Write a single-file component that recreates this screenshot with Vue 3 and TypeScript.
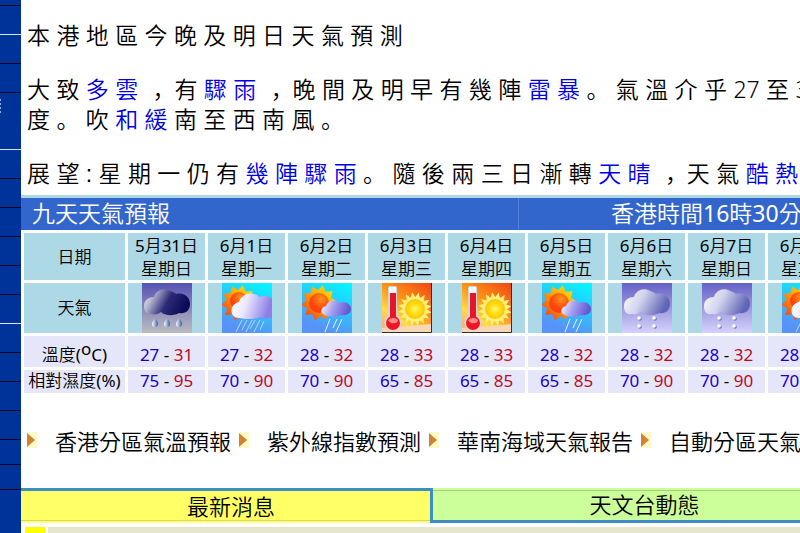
<script setup lang="ts">
type Kind = 'plain' | 'key' | 'num' | 'stop' | 'comma'
interface Part { kind: Kind; text: string }
type Icon = 'rain' | 'cloudy' | 'sunny' | 'hot' | 'showers'
interface Day { month: number; day: number; week: string; icon: Icon; temp: [number, number]; hum: [number, number] }

const p = (text: string): Part => ({ kind: 'plain', text })
const k = (text: string): Part => ({ kind: 'key', text })
const n = (text: string): Part => ({ kind: 'num', text })
const stop: Part = { kind: 'stop', text: '。' }
const comma: Part = { kind: 'comma', text: '，' }

const paragraphs: Part[][][] = [
  [[p('本 港 地 區 今 晚 及 明 日 天 氣 預 測')]],
  [
    [p('大 致 '), k('多 雲'), p(' '), comma, p(' 有 '), k('驟 雨'), p(' '), comma, p(' 晚 間 及 明 早 有 幾 陣 '), k('雷 暴'), p(' '), stop,
      p(' 氣 溫 介 乎 '), n('27'), p(' 至 '), n('31')],
    [p('度 '), stop, p(' 吹 '), k('和 緩'), p(' 南 至 西 南 風 '), stop],
  ],
  [
    [p('展 望 : 星 期 一 仍 有 '), k('幾 陣 驟 雨'), p(' '), stop, p(' 隨 後 兩 三 日 漸 轉 '), k('天 晴'),
      p(' '), comma, p(' 天 氣 '), k('酷 熱')],
  ],
]

const days: Day[] = [
  { month: 5, day: 31, week: '星期日', icon: 'rain', temp: [27, 31], hum: [75, 95] },
  { month: 6, day: 1, week: '星期一', icon: 'cloudy', temp: [27, 32], hum: [70, 90] },
  { month: 6, day: 2, week: '星期二', icon: 'sunny', temp: [28, 32], hum: [70, 90] },
  { month: 6, day: 3, week: '星期三', icon: 'hot', temp: [28, 33], hum: [65, 85] },
  { month: 6, day: 4, week: '星期四', icon: 'hot', temp: [28, 33], hum: [65, 85] },
  { month: 6, day: 5, week: '星期五', icon: 'sunny', temp: [28, 32], hum: [65, 85] },
  { month: 6, day: 6, week: '星期六', icon: 'showers', temp: [28, 32], hum: [70, 90] },
  { month: 6, day: 7, week: '星期日', icon: 'showers', temp: [28, 32], hum: [70, 90] },
  { month: 6, day: 8, week: '星期一', icon: 'cloudy', temp: [28, 32], hum: [70, 90] },
]

const links = ['香港分區氣溫預報', '紫外線指數預測', '華南海域天氣報告', '自動分區天氣']

const menu: string[] = [
  'first', 'light', '', '', 'light double', '', '', '', '', '', 'light', '', '', '', '', 'short', 'short',
]

const starPoints = (cx: number, cy: number, outer: number, inner: number, rays: number): string =>
  Array.from({ length: rays * 2 }, (_, i) => {
    const r = i % 2 ? inner : outer
    const a = (Math.PI * i) / rays - 1.35
    return `${(cx + r * Math.cos(a)).toFixed(1)},${(cy + r * Math.sin(a)).toFixed(1)}`
  }).join(' ')

const bigSun = starPoints(17, 20, 18, 13, 10)
const hotSun = starPoints(33, 26, 17, 12, 16)
const cloud = 'M10 31C4 32 2 28 2 23C2 17 7 14 12 14C14 7 22 4 28 8C31 9 33 10 34 11C43 9 48 15 48 21C48 28 43 31 37 30C32 33 23 33 19 29C16 31 13 32 10 31Z'
const smallCloud = 'M23 32C18 31 18 24 24 23C26 17 34 16 37 20C43 17 49 21 49 26C49 31 44 33 38 32C33 34 27 34 23 32Z'
</script>

<template>
  <svg class="defs" width="0" height="0" aria-hidden="true">
    <defs>
      <linearGradient id="nightSky" x2="0" y2="1"><stop offset="0" stop-color="#5652b4" /><stop offset="1" stop-color="#bcbcc0" /></linearGradient>
      <linearGradient id="darkCloud" x2="1" y2=".3"><stop offset="0" stop-color="#f4f4fa" /><stop offset=".25" stop-color="#b6b8cf" /><stop offset=".6" stop-color="#2b2b78" /><stop offset="1" stop-color="#0c0b58" /></linearGradient>
      <linearGradient id="drop" x2="1"><stop offset="0" stop-color="#fff" /><stop offset="1" stop-color="#355fa5" /></linearGradient>
      <linearGradient id="daySky" x1="1" x2=".6" y2="1"><stop offset="0" stop-color="#00fbff" /><stop offset="1" stop-color="#5793f7" /></linearGradient>
      <linearGradient id="sunRay" x1="1" x2="0" y2="1"><stop offset="0" stop-color="#fff200" /><stop offset=".45" stop-color="#ffa510" /><stop offset="1" stop-color="#f22b10" /></linearGradient>
      <radialGradient id="sunCore" cx=".6" cy=".3"><stop offset="0" stop-color="#ff9416" /><stop offset="1" stop-color="#ff430d" /></radialGradient>
      <linearGradient id="violetCloud" x2="1" y2=".2"><stop offset="0" stop-color="#fff" /><stop offset=".45" stop-color="#a8a2f0" /><stop offset="1" stop-color="#6058d4" /></linearGradient>
      <linearGradient id="whiteCloud" x2="1" y2=".2"><stop offset="0" stop-color="#fff" /><stop offset=".4" stop-color="#eeeaff" /><stop offset="1" stop-color="#8d7fe8" /></linearGradient>
      <linearGradient id="heat" x1="1" x2=".3" y2="1"><stop offset="0" stop-color="#ee4415" /><stop offset=".5" stop-color="#ff9417" /><stop offset=".8" stop-color="#ffdc42" /><stop offset="1" stop-color="#f6b486" /></linearGradient>
      <radialGradient id="hotCore"><stop offset="0" stop-color="#fff56d" /><stop offset=".45" stop-color="#ffe21c" /><stop offset="1" stop-color="#ffc400" /></radialGradient>
      <linearGradient id="paleSky" x2="0" y2="1"><stop offset="0" stop-color="#6661c6" /><stop offset="1" stop-color="#d4d3fb" /></linearGradient>
      <linearGradient id="paleCloud" x2="1" y2=".3"><stop offset="0" stop-color="#fff" /><stop offset=".45" stop-color="#d2d4ee" /><stop offset="1" stop-color="#6065b7" /></linearGradient>
    </defs>
  </svg>

  <div class="page">
    <nav class="menu">
      <div v-for="(item, i) in menu" :key="i" class="menu-row" :class="item"></div>
    </nav>

    <main class="content">
      <section class="forecast">
        <p v-for="(lines, i) in paragraphs" :key="i">
          <span v-for="(line, j) in lines" :key="j" class="line"><span v-for="(part, m) in line" :key="m" :class="part.kind">{{ part.text }}</span></span>
        </p>
      </section>

      <header class="band">
        <h2>九天天氣預報</h2>
        <div class="issued">香港時間<span class="fig">16</span>時<span class="fig">30</span>分</div>
      </header>

      <table class="days">
        <tbody>
          <tr class="date-row">
            <th scope="row">日期</th>
            <td v-for="d in days" :key="d.day"><span class="fig">{{ d.month }}</span>月<span class="fig">{{ d.day }}</span>日<br>{{ d.week }}</td>
          </tr>
          <tr class="icon-row">
            <th scope="row">天氣</th>
            <td v-for="d in days" :key="d.day">
              <svg class="icon" viewBox="0 0 50 50">
                <template v-if="d.icon === 'rain'">
                  <rect width="50" height="50" fill="url(#nightSky)" />
                  <path :d="cloud" fill="url(#darkCloud)" />
                  <g fill="url(#drop)"><path d="M13 35C15 37 16 39 16 41A3 3 0 0 1 10 41C10 39 12 37 13 35Z" /><path d="M25 35C27 37 28 39 28 41A3 3 0 0 1 22 41C22 39 24 37 25 35Z" /><path d="M37 35C39 37 40 39 40 41A3 3 0 0 1 34 41C34 39 36 37 37 35Z" /></g>
                </template>
                <template v-else-if="d.icon === 'cloudy'">
                  <rect width="50" height="50" fill="url(#daySky)" />
                  <polygon :points="bigSun" fill="url(#sunRay)" />
                  <circle cx="17" cy="18" r="9" fill="url(#sunCore)" />
                  <path d="M17 35C7 35 7 21 17 19C19 11 31 7 37 14C43 12 47 13 50 16V34C46 36 42 36 39 34C31 37 23 36 17 35Z" fill="url(#whiteCloud)" />
                  <path d="M20 37L14 49M25 37L20 47M30 37L24 49M33 37L28 46M38 37L32 49M42 38L38 47" stroke="#d3e5ff" stroke-width=".8" />
                </template>
                <template v-else-if="d.icon === 'sunny'">
                  <rect width="50" height="50" fill="url(#daySky)" />
                  <polygon :points="bigSun" fill="url(#sunRay)" />
                  <circle cx="17" cy="20" r="10" fill="url(#sunCore)" />
                  <path :d="smallCloud" fill="url(#violetCloud)" />
                  <path d="M28 36L23 49M35 36L31 45M40 36L34 49" stroke="#e6f2ff" stroke-width="1" />
                </template>
                <template v-else-if="d.icon === 'hot'">
                  <rect width="50" height="50" fill="url(#heat)" />
                  <path d="M0 45L50 41V50H0Z" fill="#f8d7b5" />
                  <polygon :points="hotSun" fill="#fff07a" />
                  <circle cx="33" cy="26" r="10" fill="url(#hotCore)" />
                  <rect x="6" y="3" width="9" height="37" rx="2" fill="#c6d9dd" />
                  <circle cx="11" cy="40" r="8.5" fill="#e3dada" />
                  <circle cx="11" cy="40" r="7" fill="#ed1722" />
                  <rect x="8" y="9" width="6" height="30" fill="#e91526" />
                  <rect x="7" y="4" width="7" height="6" fill="#eef8fa" />
                  <path d="M6 37Q11 33 16 37Q15 41 11 40Q8 41 6 37" fill="#ff8991" />
                  <path d="M49.5 0V49.5H0" fill="none" stroke="#352b2b" />
                </template>
                <template v-else>
                  <rect width="50" height="50" fill="url(#paleSky)" />
                  <path :d="cloud" fill="url(#paleCloud)" />
                  <g fill="#7775ad"><circle cx="18" cy="36" r="1.8" /><circle cx="33" cy="36" r="1.8" /><circle cx="18" cy="44" r="1.8" /><circle cx="33" cy="44" r="1.8" /></g>
                  <g fill="#fff"><circle cx="17" cy="35" r="1.8" /><circle cx="32" cy="35" r="1.8" /><circle cx="17" cy="43" r="1.8" /><circle cx="32" cy="43" r="1.8" /></g>
                </template>
              </svg>
            </td>
          </tr>
          <tr class="temp-row">
            <th scope="row">溫度<span class="fig">(<sup>o</sup>C)</span></th>
            <td v-for="d in days" :key="d.day"><span class="low">{{ d.temp[0] }}</span> - <span class="high">{{ d.temp[1] }}</span></td>
          </tr>
          <tr class="hum-row">
            <th scope="row">相對濕度<span class="fig">(%)</span></th>
            <td v-for="d in days" :key="d.day"><span class="low">{{ d.hum[0] }}</span> - <span class="high">{{ d.hum[1] }}</span></td>
          </tr>
        </tbody>
      </table>

      <nav class="links">
        <a v-for="link in links" :key="link" href="#">
          <svg class="arrow" viewBox="0 0 10 16"><rect width="10" height="16" fill="#fff9c9" /><path d="M0 1L8 8L0 15Z" fill="#cc8433" /></svg>
          <span>{{ link }}</span>
        </a>
      </nav>

      <div class="tabs">
        <button type="button" class="tab news">最新消息</button>
        <button type="button" class="tab events">天文台動態</button>
      </div>
      <div class="panel"><span class="marker"></span><span class="strip"></span></div>
    </main>
  </div>
</template>

<style>
body { overflow: hidden; background: #fff; }
</style>

<style scoped>
.defs { position: absolute; }
.page { display: flex; min-height: 100vh; overflow: hidden; color: #000; font-family: "Noto Sans", "Noto Sans CJK TC", sans-serif; font-weight: 350; }
.menu { flex: 0 0 21px; background: #003399; }
.menu-row { box-sizing: border-box; height: 29px; border-bottom: 1px solid #000820; }
.menu-row.first { height: 6px; }
.menu-row.light { border-color: #d5e8fc; }
.menu-row.double { height: 57px; padding-top: 6px; }
.menu-row.double::before { content: ""; display: block; width: 1px; height: 14px; background: repeating-linear-gradient(#8fb0e0 0 2px, #003399 2px 4px); }
.menu-row.short { height: 25px; }
.content { flex: 1; min-width: 0; }
.forecast { padding: 21px 0 6px 6px; font: 350 23px/30px "Liberation Sans", "Noto Sans CJK TC", sans-serif; }
.forecast p { margin: 0 0 24px; white-space: pre; }
.forecast p:last-child { margin: 0; }
.line { display: block; height: 30px; }
.key { color: #0000e6; }
.num { font-family: "Noto Sans", sans-serif; line-height: 0; }
.stop, .comma { font-family: "Noto Sans CJK JP", sans-serif; line-height: 0; }
.comma { padding: 0 4px 0 8px; font-feature-settings: "halt"; }
.fig { font-weight: 400; }
.band { display: flex; box-sizing: border-box; height: 35px; border-top: 3px solid #add8e6; background: #3366cc; color: #fff; font-size: 23px; line-height: 30px; white-space: nowrap; }
.band h2 { flex: 0 0 486px; margin: 0; padding-left: 11px; font: inherit; }
.issued { padding-left: 92px; border-left: 1px solid #5080d8; }
.days { width: 827px; table-layout: fixed; border-collapse: separate; border-spacing: 3px; font-size: 17px; line-height: 23px; text-align: center; }
.days th, .days td { box-sizing: border-box; padding: 0; font-weight: 350; white-space: nowrap; background: #add8e6; }
.days td { width: 77px; }
.days th { width: 101px; }
.date-row { height: 47px; }
.icon-row { height: 50px; }
.icon-row th { padding-bottom: 2px; }
.temp-row th, .temp-row td, .hum-row th, .hum-row td { background: #e6e6fa; }
.temp-row td, .hum-row td { font-weight: 400; }
.temp-row { height: 31px; }
.temp-row th, .temp-row td { padding-top: 6px; }
.hum-row { height: 23px; line-height: 21px; }
.hum-row th, .hum-row td { padding-bottom: 2px; }
sup { font-size: 17px; line-height: 0; vertical-align: 6px; }
.low { color: #1a00cc; }
.high { color: #bb0a24; }
.icon { display: block; width: 50px; height: 50px; margin: 0 auto; }
.links { display: flex; gap: 8px; padding: 29px 0 31px 6px; font-size: 22px; line-height: 32px; white-space: nowrap; }
.links a { display: flex; flex: none; gap: 18px; color: #000; text-decoration: none; }
.arrow { flex: none; width: 10px; height: 16px; margin-top: 7px; }
.tabs { display: flex; height: 35px; }
.tab { box-sizing: border-box; padding: 0; border: 0; font: 350 22px/30px "Noto Sans", "Noto Sans CJK TC", sans-serif; color: #000; }
.news { flex: 0 0 409px; padding: 0 0 4px 11px; border-top: 3px solid #3c8fc4; background: linear-gradient(#ffff66 29px, #d8d85c 29px, #d8d85c 30px, #ffff80 30px); }
.events { flex: 1 0 426px; border: solid #3c8fc4; border-width: 0 0 3px 3px; background: linear-gradient(#ccff99 2px, #a4cf83 2px, #a4cf83 3px, #ccff99 3px); }
.panel { display: flex; gap: 3px; padding: 4px 0 0 4px; height: 7px; }
.marker { width: 20px; background: #ffff00; }
.strip { flex: 1; background: #e6e6cc; }
</style>
